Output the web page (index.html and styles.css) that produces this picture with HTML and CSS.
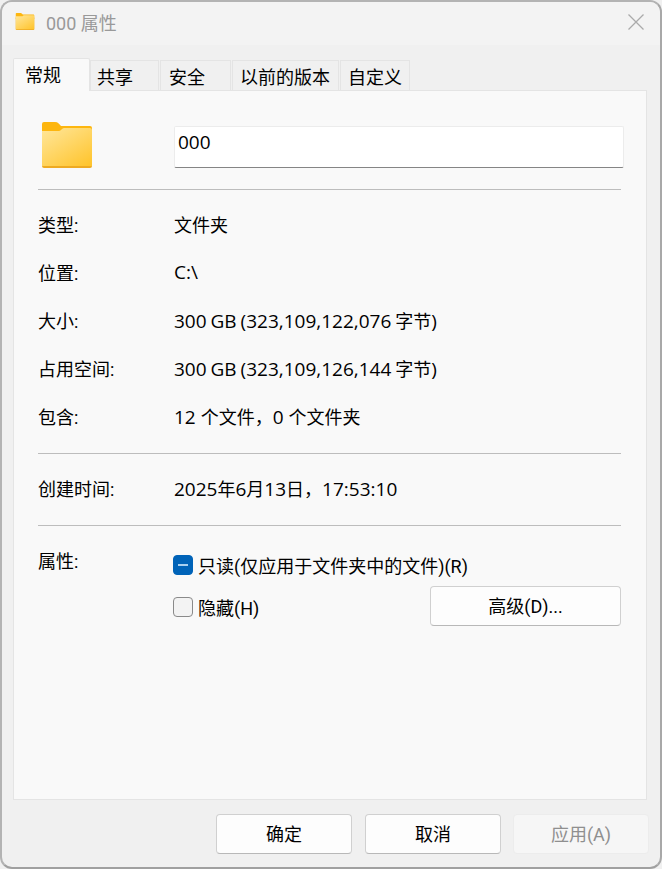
FILE: index.html
```html
<!DOCTYPE html>
<html lang="zh-CN">

<head>
    <meta charset="UTF-8">
    <meta name="viewport" content="width=device-width, initial-scale=1.0">
    <title>000 属性</title>
    <link rel="stylesheet" href="styles.css">
</head>

<body>
    <div class="window">
        <!-- Title bar -->
        <div class="titlebar">
            <svg class="title-icon" viewBox="0 0 50 46">
                <use href="#folder"></use>
            </svg>
            <span class="title-text">000 属性</span>
            <svg class="close" viewBox="0 0 16 16">
                <path d="M0.5 0.5L15.5 15.5M15.5 0.5L0.5 15.5"></path>
            </svg>
        </div>

        <div class="content">
            <!-- Tab links -->
            <div class="tab">
                <button class="tablinks active">常规</button>
                <button class="tablinks w-share">共享</button>
                <button class="tablinks w-safe">安全</button>
                <button class="tablinks w-prev">以前的版本</button>
                <button class="tablinks w-custom">自定义</button>
            </div>

            <!-- Tab content -->
            <div class="tabcontent">
                <div class="name-row">
                    <svg class="big-icon" viewBox="0 0 50 46">
                        <defs>
                            <linearGradient id="folderfill" x1="0.1" y1="0" x2="0.9" y2="1">
                                <stop offset="0" stop-color="#ffe596"></stop>
                                <stop offset="1" stop-color="#ffc52f"></stop>
                            </linearGradient>
                            <g id="folder">
                                <path fill="#fdb60f" d="M0 2a2 2 0 0 1 2-2h11c3 0 4 2 6 4h29a2 2 0 0 1 2 2v10H0z"></path>
                                <path fill="#eeaa22" d="M0 12h50v32a2 2 0 0 1-2 2H2a2 2 0 0 1-2-2z"></path>
                                <path fill="url(#folderfill)" d="M0 9h17c2 0 3-3 5-3h26a2 2 0 0 1 2 2v36H0z"></path>
                            </g>
                        </defs>
                        <use href="#folder"></use>
                    </svg>
                    <div class="name-input lat">000</div>
                </div>
                <div class="sep"></div>

                <div class="rows">
                    <div class="row"><span>类型:</span><span>文件夹</span></div>
                    <div class="row"><span>位置:</span><span class="lat">C:\</span></div>
                    <div class="row"><span>大小:</span><span><span class="lat size">300 GB (323,109,122,076 </span>字节<span class="lat">)</span></span></div>
                    <div class="row"><span>占用空间:</span><span><span class="lat size">300 GB (323,109,126,144 </span>字节<span class="lat">)</span></span></div>
                    <div class="row"><span>包含:</span><span><span class="lat">12 </span>个文件，<span class="lat">0 </span>个文件夹</span></div>
                </div>
                <div class="sep"></div>

                <div class="rows">
                    <div class="row"><span>创建时间:</span><span><span class="lat">2025</span>年<span class="lat">6</span>月<span class="lat">13</span>日，<span class="lat">17:53:10</span></span></div>
                </div>
                <div class="sep"></div>

                <div class="attrs">
                    <span class="attrs-label">属性:</span>
                    <div class="attrs-body">
                        <div class="check-row">
                            <span class="check mixed"><i></i></span>
                            <span>只读(仅应用于文件夹中的文件)(R)</span>
                        </div>
                        <div class="check-row second">
                            <span class="check"></span>
                            <span>隐藏(H)</span>
                            <button class="btn btn-adv">高级(D)...</button>
                        </div>
                    </div>
                </div>
            </div>

            <!-- Bottom buttons -->
            <div class="footer">
                <button class="btn">确定</button>
                <button class="btn">取消</button>
                <button class="btn disabled">应用(A)</button>
            </div>
        </div>
    </div>
</body>

</html>
```
FILE: styles.css
```css
* {
    box-sizing: border-box;
}

html,
body {
    margin: 0;
    height: 100%;
}

body {
    background-color: #f0f0f0;
    color: #000;
    font-family: "Roboto", "Noto Sans CJK SC", sans-serif;
    font-size: 18px;
}

button {
    font: inherit;
    color: inherit;
}

/* Latin runs are set a little larger, closer to the system font */
.lat {
    font-family: "Open Sans", "Noto Sans CJK SC", sans-serif;
    font-size: 19px;
}

.lat.size {
    word-spacing: -1px;
}

/* Outer frame */
.window {
    display: flex;
    flex-direction: column;
    width: 662px;
    height: 869px;
    border: 2px solid #b3b3b3;
    border-right-color: #a8a8a8;
    border-bottom-color: #a0a0a0;
    border-radius: 12px;
    background-color: #f0f0f0;
    overflow: hidden;
}

/* Title bar */
.titlebar {
    display: flex;
    align-items: center;
    height: 43px;
    padding: 0 16px 4px 12px;
    background-color: #f3f3f3;
}

.title-icon {
    width: 22px;
    height: 17px;
}

.title-text {
    margin-left: 10px;
    color: #999;
}

.close {
    width: 16px;
    height: 16px;
    margin-left: auto;
    fill: none;
    stroke: #aaa;
    stroke-width: 1.3;
}

.content {
    flex: 1;
    display: flex;
    flex-direction: column;
    padding: 13px 13px 0 11px;
}

/* Style the tab */
.tab {
    display: flex;
    align-items: flex-end;
    height: 33px;
    position: relative;
    z-index: 1;
    margin-bottom: -1px;
}

.tab button {
    height: 30px;
    padding: 5px 0 0 8px;
    margin: 0 1px 1px 0;
    border: 1px solid #e4e4e4;
    border-bottom: none;
    background-color: #f0f0f0;
    line-height: 24px;
    text-align: left;
}

.tab button.active {
    width: 77px;
    height: 33px;
    margin: 0;
    padding: 2px 0 0 11px;
    border-radius: 2px 2px 0 0;
    background-color: #f9f9f9;
}

.tab .w-share {
    width: 69px;
    padding-left: 6px;
}

.tab .w-safe {
    width: 71px;
}

.tab .w-prev {
    width: 107px;
    padding-left: 7px;
}

.tab .w-custom {
    width: 70px;
    padding-left: 7px;
}

/* Style the tab content */
.tabcontent {
    width: 634px;
    height: 710px;
    padding: 0 25px 0 24px;
    border: 1px solid #e4e4e4;
    background-color: #f9f9f9;
}

.name-row {
    display: flex;
    height: 98px;
    padding: 31px 0 0 4px;
}

.big-icon {
    flex: none;
    width: 50px;
    height: 46px;
}

.name-input {
    flex: none;
    width: 450px;
    height: 42px;
    margin: 4px 0 0 82px;
    padding: 0 3px;
    border: 1px solid #ececec;
    border-bottom: 1px solid #858585;
    border-radius: 2px;
    background-color: #fff;
    line-height: 30px;
}

.sep {
    height: 1px;
    background-color: #bdbdbd;
}

.rows {
    padding: 12px 0 11px;
}

.row {
    display: grid;
    grid-template-columns: 136px 1fr;
    align-items: center;
    height: 48px;
    padding-bottom: 4px;
}

/* Attributes */
.attrs {
    display: grid;
    grid-template-columns: 135px 1fr;
    padding-top: 24px;
}

.attrs-label {
    line-height: 24px;
}

.attrs-body {
    display: flex;
    flex-direction: column;
    gap: 16px;
    padding-top: 2px;
}

.check-row {
    display: flex;
    align-items: center;
    gap: 5px;
    height: 26px;
}

.check {
    display: flex;
    align-items: center;
    justify-content: center;
    width: 20px;
    height: 20px;
    border: 1px solid #8a8a8a;
    border-radius: 4px;
    background-color: #f3f3f3;
}

.check.mixed {
    border-color: #0063b8;
    background-color: #0063b8;
}

.check.mixed i {
    width: 10px;
    height: 2px;
    background-color: #a9d0f0;
}

.btn {
    width: 136px;
    height: 40px;
    padding: 0 0 2px;
    border: 1px solid #d0d0d0;
    border-bottom-color: #b8b8b8;
    border-radius: 4px;
    background-color: #fdfdfd;
}

.btn.btn-adv {
    width: 191px;
    margin-left: auto;
    margin-bottom: 2px;
}

.btn.disabled {
    margin-left: -1px;
    border-color: #ececec;
    background-color: #f6f6f6;
    color: #8f8f8f;
}

/* Bottom buttons */
.footer {
    display: flex;
    gap: 13px;
    justify-content: flex-end;
    margin-right: -2px;
    padding-top: 14px;
}
```
